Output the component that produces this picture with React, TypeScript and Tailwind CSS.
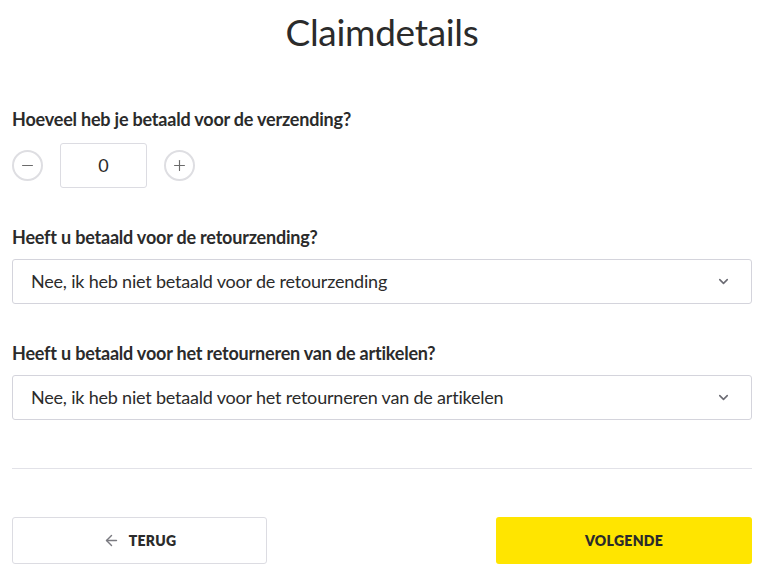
import { ArrowLeft, ChevronDown, Minus, Plus } from "lucide-react";

const font = { fontFamily: "Lato, 'Open Sans', sans-serif" };

const Label = ({ children }: { children: React.ReactNode }) => (
  <div className="text-[18px] font-bold leading-[22px] text-[#2b2b2b] tracking-[-0.2px]">
    {children}
  </div>
);

const Select = ({ value }: { value: string }) => (
  <div className="flex items-center justify-between h-[45px] pl-[18px] pr-[19px] border border-[#d4d4dc] rounded-[3px] bg-white">
    <span className="text-[18px] text-[#2b2b2b] tracking-[-0.2px]">{value}</span>
    <ChevronDown size={15} strokeWidth={2.5} className="text-[#6b6b73] mr-[1px]" />
  </div>
);

const RoundBtn = ({ children }: { children: React.ReactNode }) => (
  <button className="w-[31px] h-[31px] rounded-full border-2 border-[#dedee2] flex items-center justify-center text-[#6b6b6b] bg-white">
    {children}
  </button>
);

export default function App() {
  return (
    <div style={font} className="w-[764px] h-[578px] bg-white px-3 text-[#2b2b2b]">
      <h1 className="text-center text-[37px] font-normal leading-[44px] pt-[10px] text-[#2b2b2b] tracking-[-0.3px]">
        Claimdetails
      </h1>

      <div className="mt-[54px]">
        <Label>Hoeveel heb je betaald voor de verzending?</Label>
        <div className="flex items-center gap-[17px] mt-[13px]">
          <RoundBtn>
            <Minus size={17} strokeWidth={1.6} />
          </RoundBtn>
          <div className="w-[87px] h-[45px] border border-[#dcdce2] rounded-[3px] flex items-center justify-center text-[18px] text-[#2b2b2b]">
            0
          </div>
          <RoundBtn>
            <Plus size={17} strokeWidth={1.6} />
          </RoundBtn>
        </div>
      </div>

      <div className="mt-[38px] flex flex-col gap-[11px]">
        <Label>Heeft u betaald voor de retourzending?</Label>
        <Select value="Nee, ik heb niet betaald voor de retourzending" />
      </div>

      <div className="mt-[38px] flex flex-col gap-[11px]">
        <Label>Heeft u betaald voor het retourneren van de artikelen?</Label>
        <Select value="Nee, ik heb niet betaald voor het retourneren van de artikelen" />
      </div>

      <div className="mt-[48px] border-t border-[#e2e2e8]" />

      <div className="mt-[48px] flex justify-between">
        <button className="w-[255px] h-[47px] border border-[#dcdce2] rounded-[3px] bg-white flex items-center justify-center gap-[9px] text-[14px] font-extrabold text-[#2b2b2b] tracking-[0.3px]">
          <ArrowLeft size={17} strokeWidth={2} className="text-[#7a7a80]" />
          TERUG
        </button>
        <button className="w-[256px] h-[47px] rounded-[3px] bg-[#ffe500] flex items-center justify-center text-[14px] font-extrabold text-[#2b2b2b] tracking-[0.3px]">
          VOLGENDE
        </button>
      </div>
    </div>
  );
}
